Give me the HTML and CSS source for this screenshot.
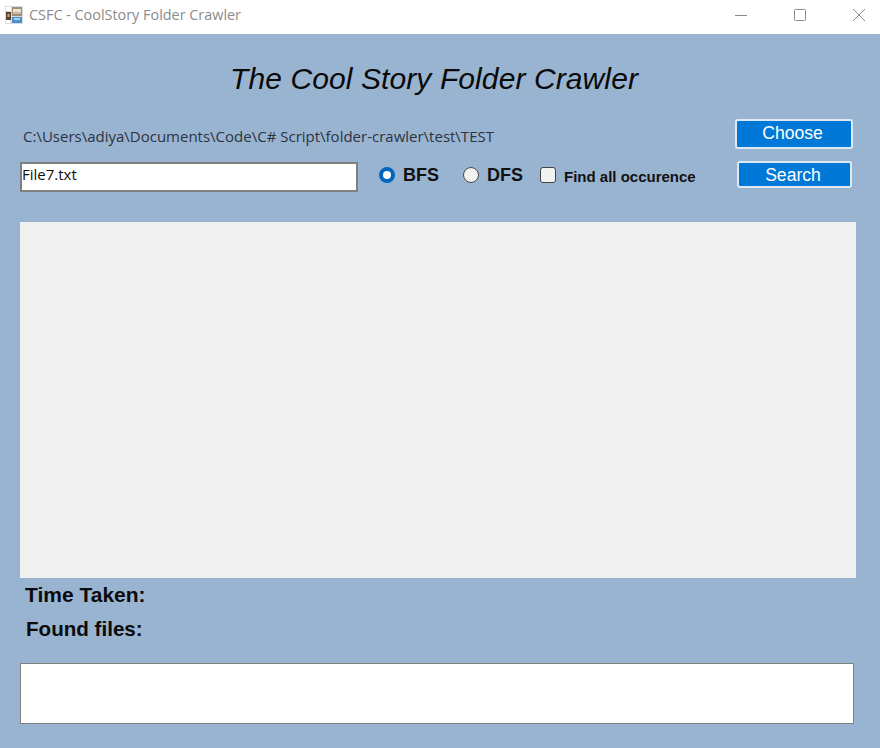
FILE: index.html
```html
<!DOCTYPE html>
<html lang="en">
<head>
<meta charset="utf-8">
<title>CSFC - CoolStory Folder Crawler</title>
<link rel="stylesheet" href="styles.css">
</head>
<body>
<div class="window">
  <header class="titlebar">
    <svg class="app-icon" width="18" height="18" viewBox="0 0 18 18">
      <rect x="0" y="0" width="18" height="18" fill="#dcdce0"/>
      <rect x="1" y="1" width="5" height="4" fill="#fff"/>
      <rect x="1" y="14" width="4" height="3" fill="#fff"/>
      <rect x="7" y="1" width="10" height="9" fill="#a58c74"/>
      <rect x="8" y="3" width="8" height="3" fill="#eee2d0"/>
      <rect x="8" y="6" width="8" height="2" fill="#c8b8a0"/>
      <rect x="1" y="6" width="5" height="8" fill="#5a4432"/>
      <rect x="2.5" y="8" width="2" height="3" fill="#c8a878"/>
      <rect x="7" y="11" width="10" height="6" fill="#4a90d0"/>
      <rect x="9" y="12" width="6" height="2" fill="#a8d4f4"/>
    </svg>
    <span class="app-title">CSFC - CoolStory Folder Crawler</span>
    <div class="win-controls">
      <svg class="win-btn" width="14" height="14" viewBox="0 0 14 14"><path d="M1 7.5H13" stroke="#8a8a8a" fill="none"/></svg>
      <svg class="win-btn" width="14" height="14" viewBox="0 0 14 14"><rect x="1.5" y="1.5" width="11" height="11" rx="1" stroke="#8a8a8a" fill="none"/></svg>
      <svg class="win-btn" width="14" height="14" viewBox="0 0 14 14"><path d="M1 1L13 13M13 1L1 13" stroke="#8a8a8a" fill="none"/></svg>
    </div>
  </header>
  <main class="form">
    <h1 class="heading">The Cool Story Folder Crawler</h1>
    <div class="row row-path">
      <span class="path">C:\Users\adiya\Documents\Code\C# Script\folder-crawler\test\TEST</span>
      <button class="btn btn-choose">Choose</button>
    </div>
    <div class="row row-search">
      <div class="field">File7.txt</div>
      <label class="opt opt-bfs"><span class="radio radio-on"></span><span class="opt-text">BFS</span></label>
      <label class="opt opt-dfs"><span class="radio"></span><span class="opt-text">DFS</span></label>
      <label class="opt opt-all"><span class="check"></span><span class="opt-small">Find all occurence</span></label>
      <button class="btn btn-search">Search</button>
    </div>
    <section class="canvas"></section>
    <div class="stat stat-time">Time Taken:</div>
    <div class="stat stat-found">Found files:</div>
    <div class="output"></div>
  </main>
</div>
</body>
</html>
```
FILE: styles.css
```css
* { box-sizing: border-box; }
html, body { margin: 0; padding: 0; }
body { width: 880px; height: 748px; overflow: hidden; font-family: "Liberation Sans", Arial, sans-serif; }
.window { width: 880px; height: 748px; display: flex; flex-direction: column; background: #99b4d1; }
.titlebar { height: 34px; flex: none; background: #fff; display: flex; align-items: center; padding-left: 5px; }
.app-icon { flex: none; margin-top: -4px; }
.app-title { margin-left: 6px; margin-top: -5px; font: 14.4px "Open Sans", "Noto Sans", sans-serif; color: #8b8b8b; white-space: nowrap; }
.win-controls { margin-left: auto; display: flex; align-items: center; gap: 45px; padding-right: 14px; margin-top: -4px; }
.win-btn { display: block; }
.form { flex: 1; display: flex; flex-direction: column; padding: 0 0 0 20px; color: #000; }
.heading { margin: 27px 0 0 0; width: 828px; height: 36px; text-align: center; font: italic 400 30px/36px "Liberation Sans", Arial, sans-serif; letter-spacing: 0.1px; color: #0a0a0a; }
.row { display: flex; }
.row-path { margin-top: 22px; height: 30px; align-items: center; justify-content: space-between; width: 833px; padding-left: 3px; }
.path { font: 15px "Open Sans", "Noto Sans", sans-serif; color: #2c3340; position: relative; top: 2px; }
.btn { background: #0078d7; color: #fff; border: 2px solid #dfe9f3; border-radius: 3px; font: 17.6px "Liberation Sans", Arial, sans-serif; padding: 0 3px 2px 0; }
.btn-choose { width: 118px; height: 30px; }
.row-search { margin-top: 13px; height: 30px; width: 832px; align-items: flex-start; }
.field { width: 338px; height: 30px; background: #fff; border: 2px solid #808080; padding: 0; font: 15px/20px "Open Sans", "Noto Sans", sans-serif; color: #111; }
.opt { display: flex; align-items: center; height: 26px; }
.opt-bfs { margin-left: 21px; }
.opt-dfs { margin-left: 24px; }
.opt-all { margin-left: 17px; }
.opt-text { margin-left: 8px; font: 700 18px "Liberation Sans", Arial, sans-serif; color: #111; }
.opt-small { margin-left: 8px; font: 700 15px "Liberation Sans", Arial, sans-serif; color: #111; position: relative; top: 1px; }
.radio { width: 16px; height: 16px; border-radius: 50%; background: #f2f2f2; border: 1px solid #4a4a4a; flex: none; }
.radio-on { border: 4.5px solid #0067c0; background: #fff; }
.check { width: 16px; height: 16px; border-radius: 3px; background: #f3f3f3; border: 1px solid #444; flex: none; }
.btn-search { width: 115px; height: 27px; margin-left: auto; margin-top: -1px; padding: 2px 3px 0 0; }
.canvas { margin-top: 30px; width: 836px; height: 356px; background: #f0f0f0; flex: none; }
.stat { font: 700 20.8px/24px "Liberation Sans", Arial, sans-serif; color: #0b0b0b; height: 24px; }
.stat-time { margin: 5px 0 0 5px; font-size: 21px; }
.stat-found { margin: 10px 0 0 6px; font-size: 20.6px; }
.output { margin-top: 22px; width: 834px; height: 61px; background: #fff; border: 1px solid #808080; }
```
